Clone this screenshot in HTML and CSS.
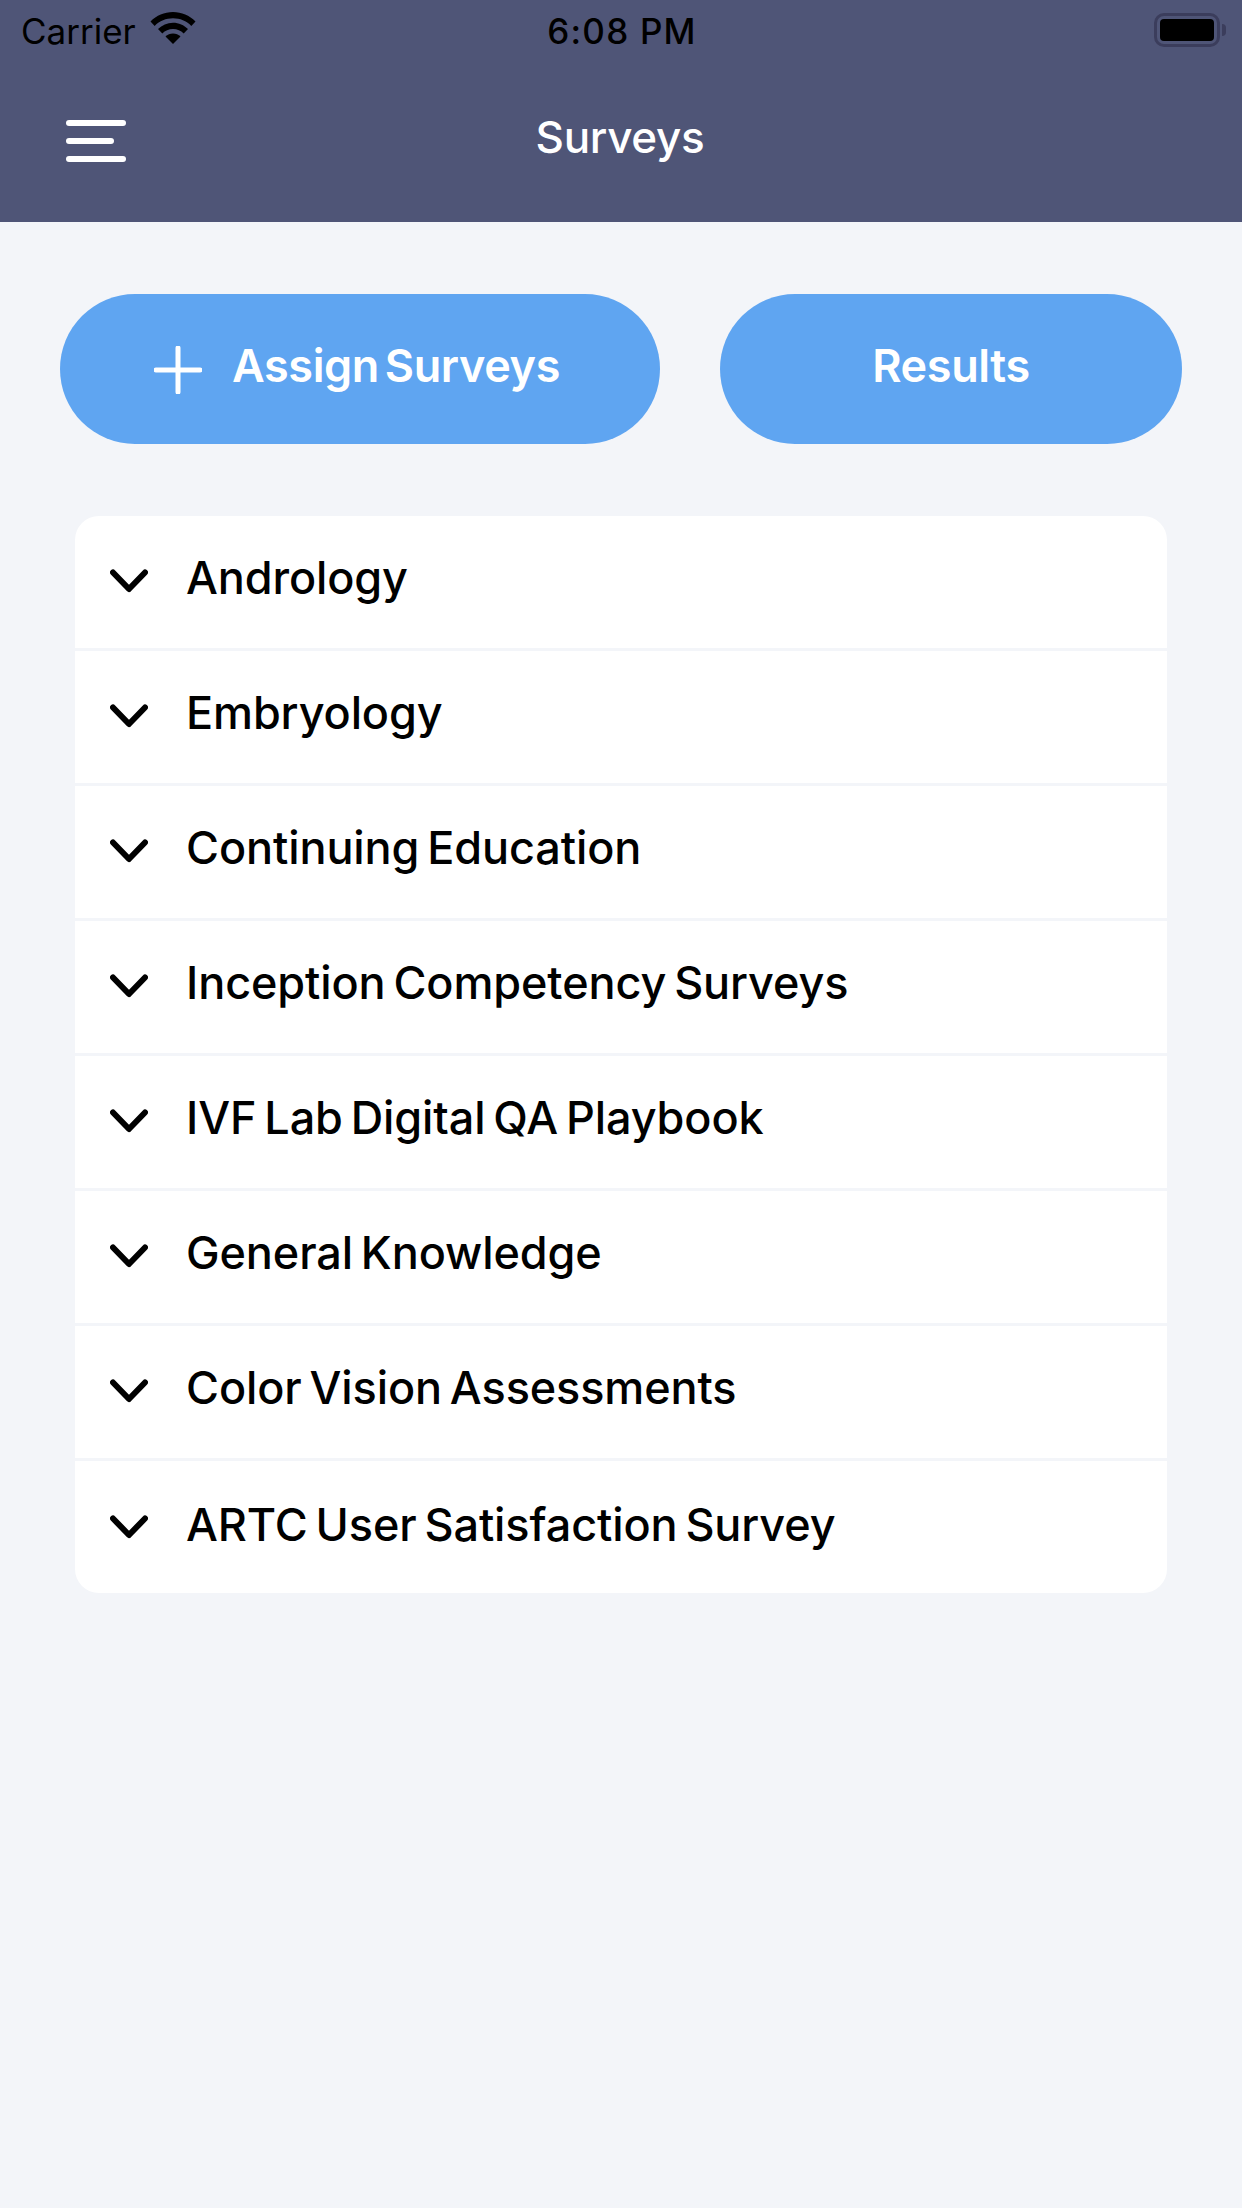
FILE: index.html
```html
<!DOCTYPE html>
<html lang="en">
<head>
    <meta charset="UTF-8">
    <meta name="viewport" content="width=device-width, initial-scale=1.0">
    <title>Surveys</title>
    <link rel="stylesheet" href="styles.css">
</head>
<body>
    <header class="app-header">
        <div class="status-bar">
            <div class="status-left">
                <span class="carrier">Carrier</span>
                <svg class="wifi-icon" width="46" height="34" viewBox="0 0 46 34">
                    <path d="M0.5 10.5C6.5 4.5 14.3 1 23 1s16.500 3.500 22.500 9.500l-4.200 4.400C36.400 10 30 7.300 23 7.300S9.600 10 4.700 14.900z"/>
                    <path d="M8 18C12 14 17.200 11.700 23 11.700S34 14 38 18l-4.300 4.400C30.900 19.700 27.200 18 23 18s-7.900 1.700-10.700 4.400z"/>
                    <path d="M15.500 25.600C17.500 23.700 20.100 22.500 23 22.500s5.500 1.200 7.500 3.100L23 33z"/>
                </svg>
            </div>
            <span class="clock">6:08 PM</span>
            <div class="battery">
                <div class="battery-body"><div class="battery-level"></div></div>
                <div class="battery-nub"></div>
            </div>
        </div>
        <div class="nav-bar">
            <button class="menu-button" aria-label="Menu">
                <span class="menu-line"></span>
                <span class="menu-line menu-line-short"></span>
                <span class="menu-line"></span>
            </button>
            <h1 class="nav-title">Surveys</h1>
        </div>
    </header>

    <main class="content">
        <div class="actions">
            <button class="action-button assign-button">
                <svg class="plus-icon" width="48" height="48" viewBox="0 0 48 48">
                    <path d="M24 2V46M2 24H46" fill="none" stroke="#fff" stroke-width="5" stroke-linecap="round"/>
                </svg>
                Assign Surveys
            </button>
            <button class="action-button results-button">Results</button>
        </div>

        <ul class="survey-list">
            <li class="survey-row">
                <svg class="chevron" width="38" height="24" viewBox="0 0 38 24"><path d="M3 3.500L19 20L35 3.500"/></svg>
                <span class="survey-name">Andrology</span>
            </li>
            <li class="survey-row">
                <svg class="chevron" width="38" height="24" viewBox="0 0 38 24"><path d="M3 3.500L19 20L35 3.500"/></svg>
                <span class="survey-name">Embryology</span>
            </li>
            <li class="survey-row">
                <svg class="chevron" width="38" height="24" viewBox="0 0 38 24"><path d="M3 3.500L19 20L35 3.500"/></svg>
                <span class="survey-name">Continuing Education</span>
            </li>
            <li class="survey-row">
                <svg class="chevron" width="38" height="24" viewBox="0 0 38 24"><path d="M3 3.500L19 20L35 3.500"/></svg>
                <span class="survey-name">Inception Competency Surveys</span>
            </li>
            <li class="survey-row">
                <svg class="chevron" width="38" height="24" viewBox="0 0 38 24"><path d="M3 3.500L19 20L35 3.500"/></svg>
                <span class="survey-name">IVF Lab Digital QA Playbook</span>
            </li>
            <li class="survey-row">
                <svg class="chevron" width="38" height="24" viewBox="0 0 38 24"><path d="M3 3.500L19 20L35 3.500"/></svg>
                <span class="survey-name">General Knowledge</span>
            </li>
            <li class="survey-row">
                <svg class="chevron" width="38" height="24" viewBox="0 0 38 24"><path d="M3 3.500L19 20L35 3.500"/></svg>
                <span class="survey-name">Color Vision Assessments</span>
            </li>
            <li class="survey-row">
                <svg class="chevron" width="38" height="24" viewBox="0 0 38 24"><path d="M3 3.500L19 20L35 3.500"/></svg>
                <span class="survey-name">ARTC User Satisfaction Survey</span>
            </li>
        </ul>
    </main>
</body>
</html>
```

FILE: styles.css
```css
* {
    box-sizing: border-box;
}
body {
    margin: 0;
    min-height: 2208px;
    background-color: #f3f5f9;
    font-family: Inter, "Liberation Sans", sans-serif;
    color: #000;
}
.app-header {
    height: 222px;
    background-color: #4f5577;
}
.status-bar {
    height: 60px;
    padding: 2px 16px 0 21px;
    display: grid;
    grid-template-columns: 1fr auto 1fr;
    align-items: center;
}
.status-left {
    display: flex;
    align-items: center;
    gap: 14px;
}
.carrier {
    font-size: 35px;
    font-weight: 400;
}
.wifi-icon {
    margin-top: -7px;
}
.clock {
    font-size: 35px;
    font-weight: 500;
    letter-spacing: 1.2px;
    margin-left: -3px;
}
.battery {
    justify-self: end;
    display: flex;
    align-items: center;
    gap: 2px;
    margin-top: -2px;
}
.battery-body {
    width: 66px;
    height: 34px;
    padding: 3px;
    border: 3px solid #3b3d5c;
    border-radius: 10px;
}
.battery-level {
    height: 100%;
    background-color: #000;
    border-radius: 4px;
}
.battery-nub {
    width: 4px;
    height: 12px;
    background-color: #3b3d5c;
    border-radius: 0 4px 4px 0;
}
.nav-bar {
    height: 162px;
    position: relative;
    display: flex;
    align-items: center;
    justify-content: center;
    padding-bottom: 8px;
}
.menu-button {
    position: absolute;
    left: 66px;
    top: 60px;
    width: 60px;
    padding: 0;
    background: none;
    border: none;
    display: flex;
    flex-direction: column;
    gap: 12px;
}
.menu-line {
    display: block;
    width: 60px;
    height: 6px;
    background-color: #fff;
    border-radius: 3px;
}
.menu-line-short {
    width: 48px;
}
.nav-title {
    margin: 0 2px 0 0;
    font-size: 44px;
    font-weight: 500;
    letter-spacing: -0.3px;
    color: #fff;
}
.content {
    padding: 72px 60px;
}
.actions {
    display: flex;
    gap: 60px;
}
.action-button {
    height: 150px;
    border: none;
    border-radius: 75px;
    background-color: #5fa5f1;
    color: #fff;
    font-family: inherit;
    font-size: 45px;
    font-weight: 600;
    letter-spacing: -0.4px;
    word-spacing: -5px;
    display: flex;
    align-items: center;
    justify-content: center;
    padding: 0 0 8px;
}
.assign-button {
    width: 600px;
    gap: 30px;
    padding-right: 6px;
}
.results-button {
    width: 462px;
}
.plus-icon {
    margin-top: 10px;
}
.survey-list {
    list-style: none;
    margin: 72px 15px 0;
    padding: 0;
    background-color: #fff;
    border-radius: 24px;
}
.survey-row {
    height: 135px;
    display: flex;
    align-items: center;
    gap: 38px;
    padding: 0 0 3px 35px;
    border-bottom: 3px solid #f3f5f9;
}
.survey-row:last-child {
    height: 132px;
    padding-bottom: 0;
    border-bottom: none;
}
.chevron {
    fill: none;
    stroke: #000;
    stroke-width: 6;
    stroke-linecap: round;
    stroke-linejoin: round;
}
.survey-name {
    font-size: 45px;
    font-weight: 500;
    letter-spacing: -0.1px;
    word-spacing: -4px;
    margin-top: -6px;
}
```
